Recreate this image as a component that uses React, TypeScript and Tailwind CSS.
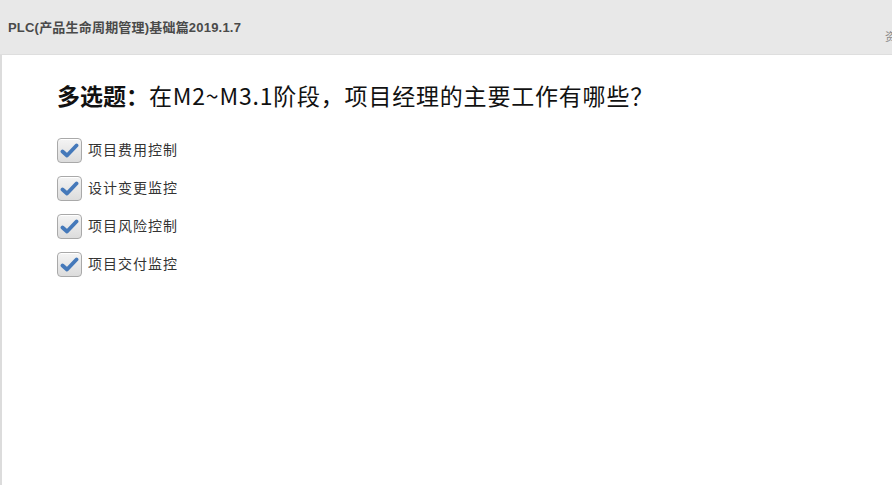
import React from 'react';

const options = ['项目费用控制', '设计变更监控', '项目风险控制', '项目交付监控'];

const CheckBox: React.FC = () => (
  <span className="flex h-[25px] w-[25px] items-center justify-center rounded-[4px] border border-[#a9a9a9] bg-gradient-to-b from-[#f4f4f4] to-[#dcdcdc] shadow-[inset_0_1px_0_#fff]">
    <svg width="19" height="17" viewBox="0 0 19 17">
      <path
        d="M2.5 9.5 L7 13.5 L16.5 3.5"
        fill="none"
        stroke="#4579ba"
        strokeWidth="3.8"
        strokeLinecap="round"
        strokeLinejoin="round"
      />
    </svg>
  </span>
);

export default function App() {
  return (
    <div className="flex h-[485px] w-[892px] flex-col overflow-hidden bg-white font-['Liberation_Sans','Noto_Sans_CJK_SC',sans-serif]">
      <header className="relative flex h-[55px] shrink-0 items-start border-b border-[#dedede] bg-[#e8e8e8] pl-2 pt-[18px]">
        <h1 className="text-[13px] font-bold tracking-[0.2px] text-[#4a4a4a]">PLC(产品生命周期管理)基础篇2019.1.7</h1>
        <span className="absolute right-[-4px] top-[29px] text-[11px] text-[#8a8a8a]">资</span>
      </header>

      <main className="flex-1 border-l-2 border-[#dcdcdc] pl-[55px] pt-[22px]">
        <h2 className="font-['Noto_Sans_CJK_SC','Noto_Sans',sans-serif] text-[23px] leading-[36px] text-[#111]">
          <span className="font-bold">多选题：</span>
          <span className="tracking-[0.8px]">在M2~M3.1阶段，项目经理的主要工作有哪些？</span>
        </h2>
        <ul className="mt-[25px] flex flex-col gap-[13px]">
          {options.map((o) => (
            <li key={o} className="flex h-[25px] items-center gap-[6px]">
              <CheckBox />
              <span className="text-[14px] tracking-[1px] text-[#333]">{o}</span>
            </li>
          ))}
        </ul>
      </main>
    </div>
  );
}
